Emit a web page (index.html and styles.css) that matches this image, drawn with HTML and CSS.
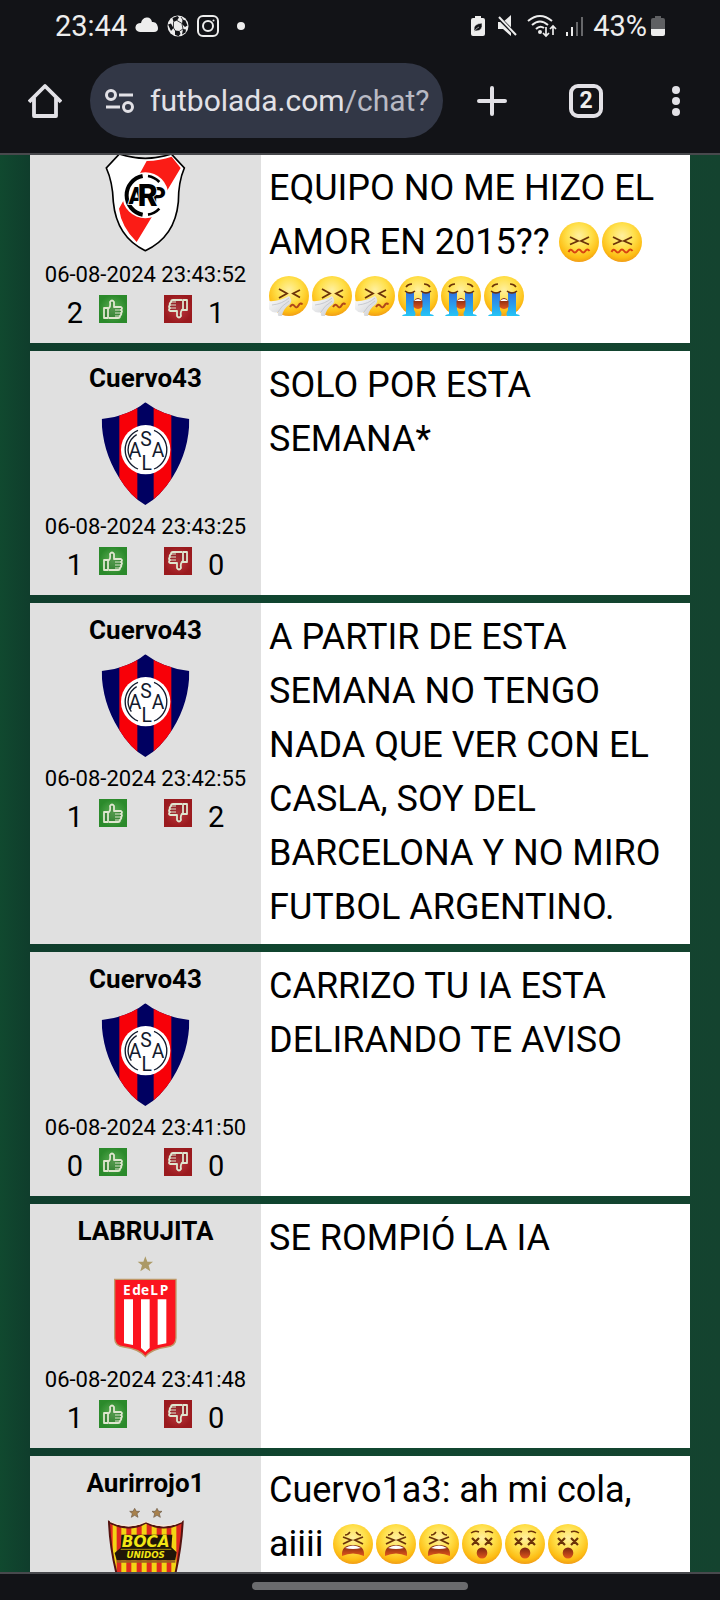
FILE: index.html
```html
<!DOCTYPE html>
<html lang="es">
<head>
<meta charset="utf-8">
<meta name="viewport" content="width=device-width, initial-scale=1">
<title>Chat</title>
<link rel="stylesheet" href="styles.css">
</head>
<body>
<svg class="defs" width="0" height="0" aria-hidden="true">
  <defs>
    <radialGradient id="skin" cx=".5" cy=".35" r=".68"><stop offset="0" stop-color="#fff0a0"/><stop offset=".45" stop-color="#ffe04a"/><stop offset=".8" stop-color="#fdbd14"/><stop offset="1" stop-color="#ee9416"/></radialGradient>
    <linearGradient id="tear" x2="0" y2="1"><stop offset="0" stop-color="#2f6fe0"/><stop offset="1" stop-color="#25c8f6"/></linearGradient>
    <linearGradient id="mouth" x2="0" y2="1"><stop offset="0" stop-color="#7a2410"/><stop offset="1" stop-color="#e2581c"/></linearGradient>
    <linearGradient id="tissueFill" x2="1" y2="1"><stop offset="0" stop-color="#fff"/><stop offset="1" stop-color="#c9cbd0"/></linearGradient>
    <radialGradient id="up"><stop offset="0" stop-color="#5fae58"/><stop offset="1" stop-color="#2b8a2b"/></radialGradient>
    <radialGradient id="down"><stop offset="0" stop-color="#c03a40"/><stop offset="1" stop-color="#9a1a1e"/></radialGradient>
    <clipPath id="caslaClip"><path d="M376 156Q430 198 508 206Q508 300 458 380Q420 440 376 464Q332 440 296 380Q246 300 245 206Q325 198 376 156Z"/></clipPath>
    <clipPath id="bocaClip"><path d="M267 248Q325 280 378 250Q432 280 488 248Q484 330 462 420Q430 480 378 500Q326 480 294 420Q270 330 267 248Z"/></clipPath>

    <symbol id="confounded" viewBox="0 0 40 40" preserveAspectRatio="xMinYMid">
      <circle cx="20" cy="20" r="20" fill="url(#skin)"/>
      <path d="M11 15l8 4-8 3.500M30 15l-8 4 8 3.500" fill="none" stroke="#6b3308" stroke-width="1.800"/>
      <path d="M9.500 30q2-4 4.200-1t4.200 0 4.200 0 4.200 0 4.200 0" fill="none" stroke="#d84310" stroke-width="2"/>
    </symbol>
    <symbol id="sneezing" viewBox="0 0 40 40" preserveAspectRatio="xMinYMid">
      <circle cx="20" cy="20" r="20" fill="url(#skin)"/>
      <path d="M10 13l8 4.500-8 4.500M31 14l-7 3.500 7 4" fill="none" stroke="#6b3308" stroke-width="1.800"/>
      <path d="M21 31q2.500-4 4.500-1t4-.500 4-1" fill="none" stroke="#b0471a" stroke-width="2"/>
      <path d="M-1 25Q10 26 20 20Q24 24 21 28Q14 33 13 40Q8 42 9 36Q3 38-1 32Z" fill="url(#tissueFill)"/>
      <path d="M3 29Q13 28 20 22M9 36Q12 30 20 25" fill="none" stroke="#bfc2c8" stroke-width=".8"/>
    </symbol>
    <symbol id="sobbing" viewBox="0 0 40 40" preserveAspectRatio="xMinYMid">
      <circle cx="20" cy="20" r="20" fill="url(#skin)"/>
      <path d="M8 11q2-3 6-3M32 11q-2-3-6-3" fill="none" stroke="#6b3308" stroke-width="1.500"/>
      <path d="M8 16h8v18q3 4 0 7H4q-1-2 4-3Z" fill="url(#tear)"/>
      <path d="M32 16H24v18q-3 4 0 7H36q1-2-4-3Z" fill="url(#tear)"/>
      <path d="M7 15q5 4 10 0M23 15q5 4 10 0" fill="none" stroke="#6b3308" stroke-width="1.600"/>
      <path d="M15.500 25q4.500-6 9 0v6q-4.500 4-9 0Z" fill="url(#mouth)"/>
      <path d="M16 25q4-4 8 0Z" fill="#fff"/>
    </symbol>
    <symbol id="tired" viewBox="0 0 40 40" preserveAspectRatio="xMinYMid">
      <circle cx="20" cy="20" r="20" fill="url(#skin)"/>
      <path d="M12 11q3 0 5-3M28 11q-3 0-5-3" fill="none" stroke="#6b3308" stroke-width="1.400"/>
      <path d="M10 13l8 3-8 4M30 13l-8 3 8 4" fill="none" stroke="#6b3308" stroke-width="1.800"/>
      <path d="M9 32Q8 21 20 21T31 32Q20 27 9 32Z" fill="url(#mouth)"/>
      <path d="M12 24Q20 19 28 24Q20 26 12 24Z" fill="#fff"/>
    </symbol>
    <symbol id="dizzy" viewBox="0 0 40 40" preserveAspectRatio="xMinYMid">
      <circle cx="20" cy="20" r="20" fill="url(#skin)"/>
      <path d="M9 9q4-3 8-1M31 9q-4-3-8-1" fill="none" stroke="#6b3308" stroke-width="1.400"/>
      <path d="M10 14l7 7M17 14l-7 7M23 14l7 7M30 14l-7 7" stroke="#6b3308" stroke-width="2.200"/>
      <ellipse cx="20" cy="29" rx="5.300" ry="5.500" fill="url(#mouth)"/>
    </symbol>

    <symbol id="hand" viewBox="0 0 28 28">
      <path d="M5 13h4v10H5ZM9 14q3-2 2-7 2-3 4 0v5h7q2 1 0 3 2 1 0 3 1 1-1 3 0 2-2 2H10" fill="#000" fill-opacity=".12" stroke="#dfe6cf" stroke-width="1.800" stroke-linejoin="round"/>
      <path d="M16 15h6M16 18h6M16 21h5" stroke="#dfe6cf" stroke-width="1"/>
    </symbol>
    <symbol id="thumb-up" viewBox="0 0 28 28"><rect width="28" height="28" fill="url(#up)"/><use href="#hand" width="28" height="28"/></symbol>
    <symbol id="thumb-down" viewBox="0 0 28 28"><rect width="28" height="28" fill="url(#down)"/><g transform="rotate(180 14 14)"><use href="#hand" width="28" height="28"/></g></symbol>

    <symbol id="casla" viewBox="219 146 315 324">
      <g clip-path="url(#caslaClip)">
        <path fill="#000061" d="M240 150h280v320H240z"/>
        <path fill="#f80008" d="M298 150h54v320h-54zM401 150h53v320h-53z"/>
      </g>
      <circle cx="377" cy="298" r="74" fill="#fff"/>
      <g fill="none" stroke="#121a2c" stroke-width="4">
        <path d="M354 240A63 63 0 0 0 354 356M350 253A52 52 0 0 0 334 328M402 240A63 63 0 0 1 402 356"/>
      </g>
      <g class="monogram">
        <text x="345" y="320">A</text><text x="378" y="288">S</text><text x="414" y="320">A</text><text x="380" y="358">L</text>
      </g>
    </symbol>

    <symbol id="carp" viewBox="279 5 315 324">
      <path d="M358 26Q436 52 514 26L553 68Q535 110 535 170Q525 275 436 316Q350 275 340 170Q338 110 319 68Z" fill="#fff" stroke="#000" stroke-width="5"/>
      <path d="M440 47Q480 46 515 34L542 68L506 128L455 216L410 290Q364 245 357 190L368 170L422 80Z" fill="#fb1c16"/>
      <circle cx="436" cy="150" r="69" fill="#fff"/>
      <path d="M428 92A59 59 0 0 0 428 208" fill="none" stroke="#000" stroke-width="12"/>
      <path d="M444 92A59 59 0 0 1 478 110M478 190A59 59 0 0 1 444 208" fill="none" stroke="#000" stroke-width="8"/>
      <g class="carp-letters"><text x="409" y="175">A</text><text x="475" y="175">P</text><text class="tall" x="443" y="183">R</text></g>
    </symbol>

    <symbol id="edelp" viewBox="219 167 315 324">
      <path d="M376 180l6 16h17l-13 11 5 18-15-10-15 10 5-18-13-11h17Z" fill="#ac9a66"/>
      <path d="M284 249H468V425Q468 450 440 452Q395 458 376 481Q357 458 312 452Q284 450 284 425Z" fill="#fb141f" stroke="#bf9867" stroke-width="4"/>
      <path d="M312 309h27v137l-27-5ZM363 309h26v146l-13 12-13-12ZM413 309h26v132l-26 5Z" fill="#fff"/>
      <text class="edelp-name" x="377" y="297">E<tspan dx="5">de</tspan><tspan dx="4">L</tspan><tspan dx="5">P</tspan></text>
    </symbol>

    <symbol id="boca" viewBox="219 194 315 324">
      <path id="bstar" d="M344 207l5 9h10l-8 7 3 11-10-6-10 6 3-11-8-7h10Z" fill="#a8814c" stroke="#6c5b49" stroke-width="2"/>
      <use href="#bstar" x="67"/>
      <g clip-path="url(#bocaClip)">
        <path fill="#f2d414" d="M260 240h240v270H260z"/>
        <path fill="#df2a20" d="M260 240h18v260h-18zM290 240h14v260h-14zM319 240h15v260h-15zM350 240h15v260h-15zM380 240h15v260h-15zM410 240h15v260h-15zM440 240h14v260h-14zM469 240h20v260h-20z"/>
        <path fill="#211508" d="M304 286h153l-3 38 16 15-4 24H290l-6-22 18-16Z"/>
        <path fill="#9b6520" d="M290 363h176v7H290z"/>
      </g>
      <path d="M267 248Q325 280 378 250Q432 280 488 248Q484 330 462 420Q430 480 378 500Q326 480 294 420Q270 330 267 248Z" fill="none" stroke="#541310" stroke-width="6"/>
      <path d="M270 246Q325 272 378 247Q432 272 486 246" fill="none" stroke="#f3e5d9" stroke-width="4"/>
      <path d="M302 330h152" stroke="#f2d414" stroke-width="2"/>
      <text class="boca-name" x="377" y="324">BOCA</text>
      <text class="boca-sub" x="377" y="355">UNIDOS</text>
    </symbol>
  </defs>
</svg>

<header class="chrome">
  <div class="status">
    <span class="clock">23:44</span>
    <svg width="24" height="32" viewBox="0 0 24 32" fill="#ededed"><path d="M5 22q-5-1-4.500-5T6 13q1-5 5.500-5.500T17 12q4-.500 5 2.500 3 7-3 7.500Z"/></svg>
    <svg width="22" height="32" viewBox="0 0 22 32"><circle cx="11" cy="16" r="10.500" fill="#ededed"/><g fill="#121317"><path d="M5.500 8l5-2 1.500 1.500-2 3-3.500 1.500ZM15.500 9.500l3 1 2 5-2.500 1.500-3-3ZM1 14.500l3-1 2.500 4.500-2.500 3ZM8 20.500l4.500.500 1 3-2 2.300-3.500-1.500ZM16 19l3 .500-.500 3-3.500 2Z"/></g><path d="M10 10.500l5 3M6.500 12l0 6 2 3M12.500 21l3.500-2-1-5M14 7l2 3" fill="none" stroke="#121317" stroke-width=".8"/></svg>
    <svg width="22" height="32" viewBox="0 0 22 32" fill="none" stroke="#ededed" stroke-width="2"><rect x="1" y="6" width="20" height="20" rx="5"/><circle cx="11" cy="16" r="5"/><circle cx="16.500" cy="10.500" r="1" fill="#ededed" stroke="none"/></svg>
    <span class="more-dot"></span>
    <span class="spacer"></span>
    <svg width="14" height="32" viewBox="0 0 14 32"><path d="M4 6h6v2h2q2 0 2 2v14q0 2-2 2H2q-2 0-2-2V10q0-2 2-2h2Z" fill="#ededed"/><path d="M3 20q-1-6 8-7 1 8-6 8M3 22q2-4 5-5" fill="#121317" stroke="#ededed" stroke-width=".6"/></svg>
    <svg class="mute" width="20" height="32" viewBox="0 0 20 32"><path d="M1 12h5l8-7v21l-8-7H1Z" fill="#ededed"/><path d="M0 6l20 20" stroke="#121317" stroke-width="4"/><path d="M2 7l17 18" stroke="#ededed" stroke-width="2"/></svg>
    <svg class="wifi" width="30" height="32" viewBox="0 0 30 32" fill="none" stroke="#ededed" stroke-width="2"><path d="M1 11Q13 1 25 11M5 15Q13 8 21 15M9 19Q13 15 17 18"/><circle cx="13" cy="22" r="2" fill="#ededed" stroke="none"/><path d="M19 17v9m-3-3l3 3 3-3M26 25v-9m-3 3l3-3 3 3" stroke-width="1.700"/></svg>
    <svg width="18" height="32" viewBox="0 0 18 32"><path d="M1 22h2v4H1ZM6 17h2v9H6Z" fill="#ededed"/><path d="M11 12h2v14h-2ZM16 7h2v19h-2Z" fill="#66676a"/></svg>
    <span class="percent">43%</span>
    <svg class="battery" width="14" height="32" viewBox="0 0 14 32"><path d="M4 6h6v2h2q2 0 2 2v9H0v-9q0-2 2-2h2Z" fill="#5f6063"/><path d="M0 19h14v5q0 2-2 2H2q-2 0-2-2Z" fill="#ededed"/></svg>
  </div>
  <div class="toolbar">
    <button class="tool" aria-label="Inicio"><svg width="34" height="36" viewBox="0 0 34 36" fill="none" stroke="#e2e1e6" stroke-width="3.800" stroke-linejoin="round"><path d="M1 19L17 3l16 16M6 15v18h22V15"/></svg></button>
    <button class="address">
      <svg width="30" height="26" viewBox="0 0 30 26" fill="none" stroke="#e2e1e6" stroke-width="3"><circle cx="7" cy="7" r="4.500"/><circle cx="24" cy="19" r="4.500"/><path d="M15 7h14M2 19h14"/></svg>
      <span class="url">futbolada.com<span class="path">/chat?</span></span>
    </button>
    <button class="tool plus" aria-label="Nueva pestaña"><svg width="30" height="30" viewBox="0 0 30 30" stroke="#e2e1e6" stroke-width="4" stroke-linecap="round"><path d="M2 15h26M15 2v26"/></svg></button>
    <button class="tool tabs">2</button>
    <button class="tool menu" aria-label="Menú"><svg width="8" height="32" viewBox="0 0 8 32" fill="#e2e1e6"><circle cx="4" cy="5" r="4"/><circle cx="4" cy="16" r="4"/><circle cx="4" cy="27" r="4"/></svg></button>
  </div>
</header>

<main class="page">
  <div class="chat">
    <article class="card scrolled">
      <div class="user">
        <h2 class="name"></h2>
        <svg class="crest"><use href="#carp"/></svg>
        <time class="date">06-08-2024 23:43:52</time>
        <div class="votes"><span>2</span><button class="vote" aria-label="Me gusta"><svg><use href="#thumb-up"/></svg></button><button class="vote" aria-label="No me gusta"><svg><use href="#thumb-down"/></svg></button><span>1</span></div>
      </div>
      <p class="message">EQUIPO NO ME HIZO EL AMOR EN 2015?? <svg class="emoji"><use href="#confounded"/></svg><svg class="emoji"><use href="#confounded"/></svg><svg class="emoji"><use href="#sneezing"/></svg><svg class="emoji"><use href="#sneezing"/></svg><svg class="emoji"><use href="#sneezing"/></svg><svg class="emoji"><use href="#sobbing"/></svg><svg class="emoji"><use href="#sobbing"/></svg><svg class="emoji"><use href="#sobbing"/></svg></p>
    </article>
    <article class="card">
      <div class="user">
        <h2 class="name">Cuervo43</h2>
        <svg class="crest"><use href="#casla"/></svg>
        <time class="date">06-08-2024 23:43:25</time>
        <div class="votes"><span>1</span><button class="vote" aria-label="Me gusta"><svg><use href="#thumb-up"/></svg></button><button class="vote" aria-label="No me gusta"><svg><use href="#thumb-down"/></svg></button><span>0</span></div>
      </div>
      <p class="message">SOLO POR ESTA SEMANA*</p>
    </article>
    <article class="card">
      <div class="user">
        <h2 class="name">Cuervo43</h2>
        <svg class="crest"><use href="#casla"/></svg>
        <time class="date">06-08-2024 23:42:55</time>
        <div class="votes"><span>1</span><button class="vote" aria-label="Me gusta"><svg><use href="#thumb-up"/></svg></button><button class="vote" aria-label="No me gusta"><svg><use href="#thumb-down"/></svg></button><span>2</span></div>
      </div>
      <p class="message">A PARTIR DE ESTA SEMANA NO TENGO NADA QUE VER CON EL CASLA, SOY DEL BARCELONA Y NO MIRO FUTBOL ARGENTINO.</p>
    </article>
    <article class="card">
      <div class="user">
        <h2 class="name">Cuervo43</h2>
        <svg class="crest"><use href="#casla"/></svg>
        <time class="date">06-08-2024 23:41:50</time>
        <div class="votes"><span>0</span><button class="vote" aria-label="Me gusta"><svg><use href="#thumb-up"/></svg></button><button class="vote" aria-label="No me gusta"><svg><use href="#thumb-down"/></svg></button><span>0</span></div>
      </div>
      <p class="message">CARRIZO TU IA ESTA DELIRANDO TE AVISO</p>
    </article>
    <article class="card">
      <div class="user">
        <h2 class="name">LABRUJITA</h2>
        <svg class="crest"><use href="#edelp"/></svg>
        <time class="date">06-08-2024 23:41:48</time>
        <div class="votes"><span>1</span><button class="vote" aria-label="Me gusta"><svg><use href="#thumb-up"/></svg></button><button class="vote" aria-label="No me gusta"><svg><use href="#thumb-down"/></svg></button><span>0</span></div>
      </div>
      <p class="message">SE ROMPIÓ LA IA</p>
    </article>
    <article class="card">
      <div class="user">
        <h2 class="name">Aurirrojo1</h2>
        <svg class="crest"><use href="#boca"/></svg>
      </div>
      <p class="message">Cuervo1a3: ah mi cola, aiiii <svg class="emoji"><use href="#tired"/></svg><svg class="emoji"><use href="#tired"/></svg><svg class="emoji"><use href="#tired"/></svg><svg class="emoji"><use href="#dizzy"/></svg><svg class="emoji"><use href="#dizzy"/></svg><svg class="emoji"><use href="#dizzy"/></svg></p>
    </article>
  </div>
</main>
<footer class="gesture"><span class="handle"></span></footer>
</body>
</html>
```
FILE: styles.css
```css
* { box-sizing: border-box; }
body {
  margin: 0;
  height: 100vh;
  display: flex;
  flex-direction: column;
  overflow: hidden;
  background: #121317;
  color: #000;
  font-family: Roboto, "Noto Sans", sans-serif;
}
button {
  border: 0;
  padding: 0;
  background: none;
  font: inherit;
  color: inherit;
}
h2, p { margin: 0; }
.defs { position: absolute; }

.chrome {
  flex: none;
  background: #121317;
  color: #ededed;
  border-bottom: 2px solid #48494d;
}
.status {
  display: flex;
  align-items: center;
  gap: 8px;
  height: 52px;
  padding: 0 55px;
  font-size: 29px;
}
.more-dot {
  width: 8px;
  height: 8px;
  margin-left: 10px;
  border-radius: 50%;
  background: #ededed;
}
.spacer { flex: 1; }
.mute { margin-left: 4px; }
.wifi { margin-left: 2px; }
.percent { margin-left: 2px; }
.battery { margin-left: -4px; }

.toolbar {
  display: flex;
  align-items: center;
  height: 101px;
  padding: 0 40px 4px 28px;
}
.tool { flex: none; }
.tool svg { display: block; }
.address {
  flex: 1;
  min-width: 0;
  display: flex;
  align-items: center;
  gap: 16px;
  height: 75px;
  margin: 0 34px 0 28px;
  padding: 0 12px 0 14px;
  border-radius: 38px;
  background: #323746;
  color: #e2e1e6;
}
.address svg { flex: none; }
.url {
  font-size: 30px;
  white-space: nowrap;
}
.path { color: #b9bac4; }
.plus { margin-right: 62px; }
.tabs {
  width: 34px;
  height: 34px;
  margin-right: 69px;
  border: 4px solid #e2e1e6;
  border-radius: 9px;
  font-size: 23px;
  font-weight: 700;
  line-height: 26px;
}

.page {
  flex: 1;
  min-height: 0;
  overflow: hidden;
  padding: 0 30px;
  background: linear-gradient(90deg, #10492f, #0f3d2c 30px, #104730 50%, #14432f);
}
.chat {
  display: flex;
  flex-direction: column;
  gap: 8px;
  margin-top: -56px;
}
.card {
  display: grid;
  grid-template-columns: 35% 1fr;
  background: #fff;
}
.user {
  display: flex;
  flex-direction: column;
  align-items: center;
  padding: 8px 0 16px;
  background: #e0e0e0;
}
.name {
  height: 40px;
  font-size: 26px;
  line-height: 38px;
}
.crest {
  width: 105px;
  height: 108px;
}
.date {
  font-size: 22px;
  line-height: 40px;
}
.votes {
  display: flex;
  align-items: baseline;
  gap: 16px;
  font-size: 29px;
  line-height: 28px;
}
.vote + .vote { margin-left: 21px; }
.vote svg {
  display: inline-block;
  width: 28px;
  height: 28px;
}
.message {
  padding: 7px 8px 10px;
  font-size: 36px;
  line-height: 54px;
}
.scrolled .message { padding-top: 62px; }
.emoji {
  width: 43px;
  height: 40px;
  vertical-align: -8px;
}

.monogram {
  fill: #121a2c;
  font-size: 58px;
  text-anchor: middle;
}
.carp-letters {
  fill: #000;
  stroke: #fff;
  stroke-width: 5px;
  paint-order: stroke;
  font-size: 70px;
  font-weight: 900;
  text-anchor: middle;
}
.carp-letters .tall { font-size: 92px; }
.edelp-name {
  fill: #fff;
  font-family: "Open Sans", sans-serif;
  font-size: 41px;
  font-weight: 700;
  text-anchor: middle;
}
.boca-name, .boca-sub {
  fill: #f2e614;
  font-family: "DejaVu Sans", sans-serif;
  font-style: italic;
  font-weight: 700;
  text-anchor: middle;
}
.boca-name { font-size: 46px; }
.boca-sub { font-size: 26px; }

.gesture {
  flex: none;
  display: flex;
  justify-content: center;
  height: 28px;
  padding-top: 8px;
  border-top: 2px solid #48494d;
  background: #121317;
}
.handle {
  width: 30%;
  height: 8px;
  border-radius: 4px;
  background: #6a6b6e;
}
```
